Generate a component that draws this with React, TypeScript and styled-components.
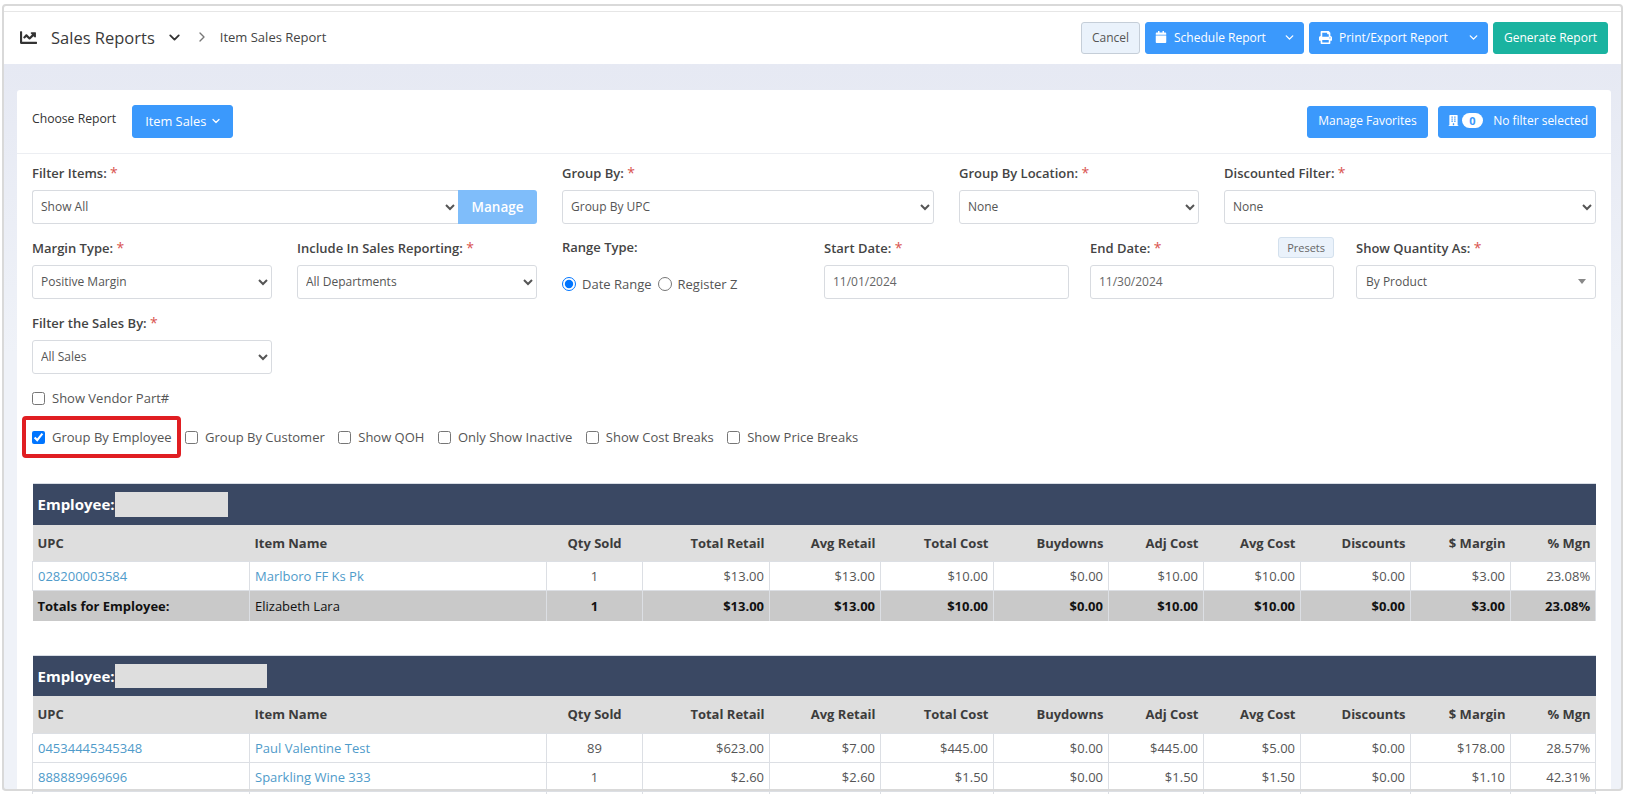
import React from "react";
import styled, { createGlobalStyle } from "styled-components";
import { FaBuilding, FaCalendar, FaChartLine, FaPrint } from "react-icons/fa";
import { ChevronDown, ChevronRight } from "lucide-react";

const Global = createGlobalStyle`
  html, body { margin: 0; padding: 0; background: #fff; }
  body { font-family: "Open Sans", "Liberation Sans", sans-serif; font-size: 13px; color: #444; }
  * { box-sizing: border-box; }
`;

const Viewport = styled.div`
  position: relative;
  width: 1627px;
  height: 794px;
  overflow: hidden;
  padding: 11px 4px 0 2px;
`;

const FrameLine = styled.div`
  position: absolute;
  top: 4px;
  left: 2px;
  right: 4px;
  height: 787px;
  border: 2px solid #d9d9d9;
  border-radius: 4px;
  pointer-events: none;
  z-index: 2;
`;

const Header = styled.header`
  height: 53px;
  background: #fff;
  border-top: 1px solid #e6e6e6;
  display: flex;
  align-items: center;
  justify-content: space-between;
  padding: 0 15px 0 18px;
`;

const Crumbs = styled.div`
  display: flex;
  align-items: center;
  color: #444;
  margin-top: -2px;
`;

const Title = styled.span`
  font-size: 16.5px;
  margin-left: 14px;
  color: #3a3a3a;
`;

const Current = styled.span`
  font-size: 13px;
  margin-left: 10px;
`;

const Actions = styled.div`
  display: flex;
  align-items: center;
  gap: 5px;
`;

const Btn = styled.button<{ $tone?: "blue" | "teal" | "pale"; $w?: number; $h?: number; $size?: number; $center?: boolean }>`
  display: inline-flex;
  align-items: center;
  justify-content: ${(p) => (p.$center ? "center" : "space-between")};
  height: ${(p) => p.$h ?? 32}px;
  width: ${(p) => (p.$w ? `${p.$w}px` : "auto")};
  padding: 0 ${(p) => (p.$center ? "8px" : "7px")} 2px ${(p) => (p.$center ? "8px" : "9px")};
  border-radius: 3px;
  border: 1px solid ${(p) => (p.$tone === "pale" ? "#c5ced8" : p.$tone === "teal" ? "#1ab3a0" : "#3b99fc")};
  background: ${(p) => (p.$tone === "pale" ? "#eaf2fb" : p.$tone === "teal" ? "#1ab3a0" : "#3b99fc")};
  color: ${(p) => (p.$tone === "pale" ? "#555" : "#fff")};
  font: 400 ${(p) => p.$size ?? 12}px "Open Sans", sans-serif;
  white-space: nowrap;
`;

const BtnLabel = styled.span`
  display: inline-flex;
  align-items: center;
  gap: 7px;
`;

const ItemSalesBtn = styled(Btn)`
  padding-left: 12px;
  padding-right: 10px;
`;

const Content = styled.main`
  background: linear-gradient(#e6e9f3, #eff2f8 40%);
  padding: 26px 12px 0 15px;
  height: 726px;
`;

const Card = styled.section`
  background: #fff;
  border-radius: 3px;
  padding: 0 15px;
  height: 760px;
`;

const TopRow = styled.div`
  display: flex;
  align-items: center;
  height: 64px;
  margin: 0 -15px;
  padding: 0 15px;
  border-bottom: 1px solid #eceef2;
`;

const ChooseLabel = styled.span`
  font-size: 12.2px;
  font-weight: 500;
  color: #333;
  margin: -6px 16px 0 0;
`;

const TopRight = styled.div`
  margin-left: auto;
  display: flex;
  gap: 10px;
`;

const Count = styled.span`
  display: inline-flex;
  align-items: center;
  justify-content: center;
  width: 21px;
  height: 15px;
  border-radius: 8px;
  background: #fff;
  color: #3b99fc;
  font-size: 11px;
  font-weight: 700;
  margin: 0 0 0 -4px;
`;

const FormGrid = styled.div<{ $cols: string; $top?: number }>`
  display: grid;
  grid-template-columns: ${(p) => p.$cols};
  margin-top: ${(p) => p.$top ?? 15}px;
`;

const Field = styled.div<{ $pad?: number }>`
  display: flex;
  flex-direction: column;
  padding-right: ${(p) => p.$pad ?? 0}px;
`;

const Label = styled.div`
  display: flex;
  justify-content: space-between;
  align-items: center;
  height: 18px;
  padding-bottom: 2px;
  margin-bottom: 8px;
  font-size: 13px;
  font-weight: 600;
  color: #444;
`;

const Req = styled.span`
  color: #d9534f;
  font-weight: 400;
  font-size: 14px;
`;

const SelectRow = styled.div`
  display: flex;
`;

const Select = styled.select`
  width: 100%;
  height: 34px;
  padding: 0 4px 2px;
  border: 1px solid #d8dbe0;
  border-radius: 3px;
  background: #fff;
  color: #555;
  font: 400 12px "Open Sans", sans-serif;
`;

const JoinedSelect = styled(Select)`
  flex: 1;
  min-width: 0;
  border-radius: 3px 0 0 3px;
  border-right: 0;
`;

const Manage = styled.button`
  width: 79px;
  height: 34px;
  border: 0;
  border-radius: 0 3px 3px 0;
  background: #7fbdfa;
  color: #fff;
  font: 600 13.5px "Open Sans", sans-serif;
`;

const DateInput = styled.input`
  height: 34px;
  padding: 0 8px 2px;
  border: 1px solid #d8dbe0;
  border-radius: 3px;
  color: #666;
  font: 400 12px "Open Sans", sans-serif;
`;

const FakeSelect = styled.div`
  display: flex;
  align-items: center;
  justify-content: space-between;
  height: 34px;
  padding: 0 9px 2px;
  border: 1px solid #d8dbe0;
  border-radius: 3px;
  color: #555;
  font-size: 12px;
`;

const Caret = styled.i`
  width: 0;
  height: 0;
  border: 4px solid transparent;
  border-top: 5px solid #888;
  border-bottom: 0;
`;

const Presets = styled.button`
  height: 21px;
  padding: 0 8px;
  border: 1px solid #d3e0ed;
  border-radius: 3px;
  background: #eaf2fb;
  color: #666;
  font: 400 11px "Open Sans", sans-serif;
`;

const Radios = styled.div`
  display: flex;
  align-items: center;
  height: 34px;
  padding-top: 3px;
  gap: 6px;
  color: #555;
`;

const Radio = styled.input`
  width: 14px;
  height: 14px;
  margin: 0;
  accent-color: #0075ff;
`;

const CheckRow = styled.div<{ $top: number }>`
  display: flex;
  align-items: center;
  gap: 13.5px;
  margin-top: ${(p) => p.$top}px;
  height: 22px;
`;

const CheckLabel = styled.label`
  position: relative;
  display: inline-flex;
  align-items: center;
  gap: 7px;
  color: #555;
  font-size: 13px;
  white-space: nowrap;
`;

const Check = styled.input`
  width: 13px;
  height: 13px;
  margin: 0;
  accent-color: #0075ff;
`;

const Highlight = styled.span`
  position: absolute;
  left: -10px;
  right: -9px;
  top: -12px;
  bottom: -12px;
  border: 4px solid #e01e22;
  border-radius: 4px;
  pointer-events: none;
`;

const ReportTable = styled.table<{ $top: number }>`
  width: 1563px;
  table-layout: fixed;
  border-collapse: collapse;
  margin-top: ${(p) => p.$top}px;
  font-size: 13px;
`;

const EmployeeCell = styled.th`
  height: 41px;
  padding: 0 5px;
  background: #3a4863;
  border-top: 1px solid #d8dde5;
  color: #fff;
  font-size: 15px;
  font-weight: 700;
  text-align: left;
`;

const EmployeeInner = styled.div`
  display: flex;
  align-items: center;
`;

const Redacted = styled.span<{ $w: number; $h: number }>`
  display: inline-block;
  width: ${(p) => p.$w}px;
  height: ${(p) => p.$h}px;
  background: #dedede;
`;

const HeadCell = styled.th<{ $right?: boolean; $center?: boolean }>`
  height: 37px;
  padding: 0 5px;
  background: #dedede;
  color: #3c3c3c;
  font-weight: 700;
  font-size: 13px;
  text-align: ${(p) => (p.$center ? "center" : p.$right ? "right" : "left")};
`;

const Cell = styled.td<{ $right?: boolean; $center?: boolean }>`
  height: 29px;
  padding: 0 5px;
  border: 1px solid #dcdfe4;
  color: #555;
  font-size: 13px;
  text-align: ${(p) => (p.$center ? "center" : p.$right ? "right" : "left")};
`;

const TotalCell = styled.td<{ $right?: boolean; $center?: boolean; $plain?: boolean }>`
  height: 30px;
  padding: 0 5px;
  background: #c9c9c9;
  border-right: 1px solid #dcdfe4;
  color: #111;
  font-size: 13px;
  font-weight: ${(p) => (p.$plain ? 400 : 700)};
  text-align: ${(p) => (p.$center ? "center" : p.$right ? "right" : "left")};
`;

const Link = styled.a`
  color: #4f9bca;
  text-decoration: none;
`;

const widths = [217, 297, 96, 127, 111, 113, 115, 95, 97, 110, 100, 85];
const heads = ["UPC", "Item Name", "Qty Sold", "Total Retail", "Avg Retail", "Total Cost", "Buydowns", "Adj Cost", "Avg Cost", "Discounts", "$ Margin", "% Mgn"];

type Row = string[];

function Table({ top, barW, barH, rows, totals }: { top: number; barW: number; barH: number; rows: Row[]; totals?: Row }) {
  return (
    <ReportTable $top={top}>
      <colgroup>
        {widths.map((w, i) => (
          <col key={i} style={{ width: w }} />
        ))}
      </colgroup>
      <thead>
        <tr>
          <EmployeeCell colSpan={12}>
            <EmployeeInner>
              Employee:
              <Redacted $w={barW} $h={barH} />
            </EmployeeInner>
          </EmployeeCell>
        </tr>
        <tr>
          {heads.map((h, i) => (
            <HeadCell key={h} $center={i === 2} $right={i > 2}>
              {h}
            </HeadCell>
          ))}
        </tr>
      </thead>
      <tbody>
        {rows.map((r, n) => (
          <tr key={n}>
            {r.map((c, i) => (
              <Cell key={i} $center={i === 2} $right={i > 2}>
                {i < 2 ? <Link href="#">{c}</Link> : c}
              </Cell>
            ))}
          </tr>
        ))}
        {totals && (
          <tr>
            {totals.map((c, i) => (
              <TotalCell key={i} $plain={i === 1} $center={i === 2} $right={i > 2}>
                {c}
              </TotalCell>
            ))}
          </tr>
        )}
      </tbody>
    </ReportTable>
  );
}

const F = ({ text, req = true }: { text: string; req?: boolean }) => (
  <span>
    {text} {req && <Req>*</Req>}
  </span>
);

export default function App() {
  return (
    <Viewport>
      <Global />
      <FrameLine />
      <Header>
        <Crumbs>
          <FaChartLine size={17} color="#333" />
          <Title>Sales Reports</Title>
          <ChevronDown size={17} strokeWidth={2.6} color="#333" style={{ marginLeft: 11 }} />
          <ChevronRight size={16} color="#777" style={{ marginLeft: 11 }} />
          <Current>Item Sales Report</Current>
        </Crumbs>
        <Actions>
          <Btn $tone="pale" $w={59} $center>Cancel</Btn>
          <Btn $w={159}>
            <BtnLabel><FaCalendar size={12} />Schedule Report</BtnLabel>
            <ChevronDown size={13} strokeWidth={2.5} />
          </Btn>
          <Btn $w={179}>
            <BtnLabel><FaPrint size={13} />Print/Export Report</BtnLabel>
            <ChevronDown size={13} strokeWidth={2.5} />
          </Btn>
          <Btn $tone="teal" $w={115} $center>Generate Report</Btn>
        </Actions>
      </Header>
      <Content>
        <Card>
          <TopRow>
            <ChooseLabel>Choose Report</ChooseLabel>
            <ItemSalesBtn $w={101} $h={33} $size={12.8}>
              Item Sales <ChevronDown size={12} strokeWidth={2.5} />
            </ItemSalesBtn>
            <TopRight>
              <Btn $w={121} $center>Manage Favorites</Btn>
              <Btn $w={158}>
                <BtnLabel><FaBuilding size={11} /><Count>0</Count></BtnLabel>
                No filter selected
              </Btn>
            </TopRight>
          </TopRow>

          <FormGrid $cols="530px 397px 265px 372px" $top={10}>
            <Field $pad={25}>
              <Label><F text="Filter Items:" /></Label>
              <SelectRow>
                <JoinedSelect><option>Show All</option></JoinedSelect>
                <Manage>Manage</Manage>
              </SelectRow>
            </Field>
            <Field $pad={25}>
              <Label><F text="Group By:" /></Label>
              <Select><option>Group By UPC</option></Select>
            </Field>
            <Field $pad={25}>
              <Label><F text="Group By Location:" /></Label>
              <Select><option>None</option></Select>
            </Field>
            <Field>
              <Label><F text="Discounted Filter:" /></Label>
              <Select><option>None</option></Select>
            </Field>
          </FormGrid>

          <FormGrid $cols="265px 265px 262px 266px 266px 240px">
            <Field $pad={25}>
              <Label><F text="Margin Type:" /></Label>
              <Select><option>Positive Margin</option></Select>
            </Field>
            <Field $pad={25}>
              <Label><F text="Include In Sales Reporting:" /></Label>
              <Select><option>All Departments</option></Select>
            </Field>
            <Field>
              <Label><F text="Range Type:" req={false} /></Label>
              <Radios>
                <Radio type="radio" name="r" defaultChecked />
                Date Range
                <Radio type="radio" name="r" />
                Register Z
              </Radios>
            </Field>
            <Field $pad={21}>
              <Label><F text="Start Date:" /></Label>
              <DateInput defaultValue="11/01/2024" />
            </Field>
            <Field $pad={22}>
              <Label>
                <F text="End Date:" />
                <Presets>Presets</Presets>
              </Label>
              <DateInput defaultValue="11/30/2024" />
            </Field>
            <Field>
              <Label><F text="Show Quantity As:" /></Label>
              <FakeSelect>By Product<Caret /></FakeSelect>
            </Field>
          </FormGrid>

          <FormGrid $cols="240px">
            <Field>
              <Label><F text="Filter the Sales By:" /></Label>
              <Select><option>All Sales</option></Select>
            </Field>
          </FormGrid>

          <CheckRow $top={13}>
            <CheckLabel><Check type="checkbox" />Show Vendor Part#</CheckLabel>
          </CheckRow>
          <CheckRow $top={17}>
            <CheckLabel>
              <Check type="checkbox" defaultChecked />Group By Employee
              <Highlight />
            </CheckLabel>
            <CheckLabel><Check type="checkbox" />Group By Customer</CheckLabel>
            <CheckLabel><Check type="checkbox" />Show QOH</CheckLabel>
            <CheckLabel><Check type="checkbox" />Only Show Inactive</CheckLabel>
            <CheckLabel><Check type="checkbox" />Show Cost Breaks</CheckLabel>
            <CheckLabel><Check type="checkbox" />Show Price Breaks</CheckLabel>
          </CheckRow>

          <Table
            top={35}
            barW={113}
            barH={25}
            rows={[["028200003584", "Marlboro FF Ks Pk", "1", "$13.00", "$13.00", "$10.00", "$0.00", "$10.00", "$10.00", "$0.00", "$3.00", "23.08%"]]}
            totals={["Totals for Employee:", "Elizabeth Lara", "1", "$13.00", "$13.00", "$10.00", "$0.00", "$10.00", "$10.00", "$0.00", "$3.00", "23.08%"]}
          />
          <Table
            top={34}
            barW={152}
            barH={24}
            rows={[
              ["04534445345348", "Paul Valentine Test", "89", "$623.00", "$7.00", "$445.00", "$0.00", "$445.00", "$5.00", "$0.00", "$178.00", "28.57%"],
              ["888889969696", "Sparkling Wine 333", "1", "$2.60", "$2.60", "$1.50", "$0.00", "$1.50", "$1.50", "$0.00", "$1.10", "42.31%"],
              ["", "", "", "", "", "", "", "", "", "", "", ""],
            ]}
          />
        </Card>
      </Content>
    </Viewport>
  );
}
